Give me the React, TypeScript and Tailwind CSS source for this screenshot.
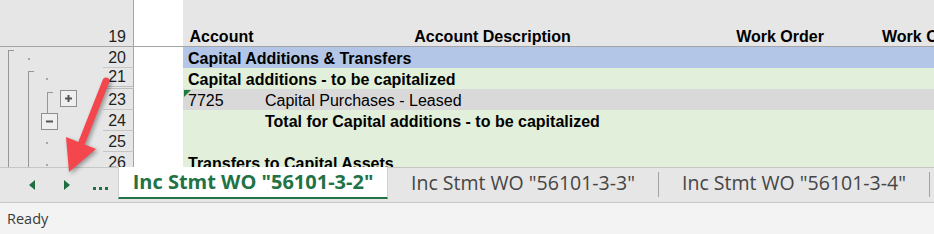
// ** Sheet rows shown under the header
type TSheetRow = {
    num: string
    fill: string
    doubleLine?: boolean
    span?: string
    account?: string
    desc?: string
    bold?: boolean
    flag?: boolean
}

const ROWS: TSheetRow[] = [
    {num: "20", fill: "bg-[#b4c6e7]", span: "Capital Additions & Transfers", bold: true},
    {num: "21", fill: "bg-[#e2efda]", span: "Capital additions - to be capitalized", bold: true, doubleLine: true},
    {num: "23", fill: "bg-[#d9d9d9]", account: "7725", desc: "Capital Purchases - Leased", flag: true},
    {num: "24", fill: "bg-[#e2efda]", account: "", desc: "Total for Capital additions - to be capitalized", bold: true},
    {num: "25", fill: "bg-[#e2efda]"},
    {num: "26", fill: "bg-[#e2efda]", span: "Transfers to Capital Assets", bold: true},
]

const TABS = ['Inc Stmt WO "56101-3-3"', 'Inc Stmt WO "56101-3-4"']

const OutlineButton = ({expand, className}: { expand?: boolean, className: string }) => (
    <div
        className={`absolute flex size-[17px] items-center justify-center border border-[#8f8f8f] bg-[#efefef] ${className}`}>
        <svg width="9" height="9" viewBox="0 0 9 9">
            <path d="M1 4.5h7" stroke="#555" strokeWidth="2"/>
            {expand && <path d="M4.5 1v7" stroke="#555" strokeWidth="2"/>}
        </svg>
    </div>
)

const OutlineGutter = () => (
    <div className="flex w-[103px] shrink-0 flex-col bg-[#e6e6e6]">
        <div className="h-[47px] shrink-0 border-b border-[#a5a5a5]"/>
        <div className="relative flex-1">
            {/* Level 1 */}
            <div className="absolute bottom-0 left-[8px] top-[3px] w-[6px] border-l border-t border-[#969696]"/>
            <div className="absolute left-[28px] top-[11px] size-[2px] bg-[#a8a8a8]"/>

            {/* Level 2 */}
            <div className="absolute bottom-0 left-[28px] top-[24px] w-[6px] border-l border-t border-[#969696]"/>
            <div className="absolute left-[46px] top-[31px] size-[2px] bg-[#a8a8a8]"/>

            {/* Level 3 */}
            <div className="absolute left-[47px] top-[45px] h-[21px] w-[6px] border-l border-t border-[#969696]"/>
            <OutlineButton expand className="left-[60px] top-[43px]"/>
            <OutlineButton className="left-[41px] top-[66px]"/>
            <div className="absolute left-[46px] top-[95px] size-[2px] bg-[#a8a8a8]"/>
            <div className="absolute left-[46px] top-[117px] size-[2px] bg-[#a8a8a8]"/>
        </div>
    </div>
)

const HeaderRow = () => (
    <div className="flex h-[47px] shrink-0 border-b border-[#a5a5a5] font-bold">
        <div
            className="flex w-[31px] shrink-0 items-end justify-end border-r border-[#a5a5a5] bg-[#e6e6e6] pr-[7px] font-normal text-[#1f1f1f]">19
        </div>
        <div className="w-[49px] shrink-0 bg-white"/>
        <div className="flex flex-1 items-end bg-[#e7e6e6] text-black">
            <div className="w-[77px] shrink-0 text-center">Account</div>
            <div className="w-[465px] shrink-0 text-center">Account Description</div>
            <div className="w-[110px] shrink-0 text-center">Work Order</div>
            <div className="flex-1 overflow-hidden whitespace-nowrap pl-[47px]">Work Order Description</div>
        </div>
    </div>
)

const SheetRow = ({row}: { row: TSheetRow }) => (
    <div className="flex h-[21px] shrink-0">
        <div
            className={`flex w-[31px] shrink-0 items-end justify-end border-r border-r-[#a5a5a5] bg-[#e6e6e6] pr-[7px] text-[#1f1f1f] ${row.doubleLine ? "border-b-[3px] border-double border-b-[#bdbdbd]" : "border-b border-b-[#c6c6c6]"}`}>
            {row.num}
        </div>
        <div className="w-[49px] shrink-0 bg-white"/>
        <div className={`flex flex-1 items-end whitespace-nowrap text-black ${row.fill} ${row.bold ? "font-bold" : ""}`}>
            {row.span && <div className="pl-[5px]">{row.span}</div>}
            {row.desc !== undefined && (
                <>
                    <div className="relative h-full w-[77px] shrink-0">
                        {row.flag && (
                            <svg className="absolute left-px top-px" width="7" height="7" viewBox="0 0 7 7">
                                <polygon points="0,0 7,0 0,7" fill="#1f7a3c"/>
                            </svg>
                        )}
                        <div className="absolute bottom-0 left-[5px]">{row.account}</div>
                    </div>
                    <div className="pl-[5px]">{row.desc}</div>
                </>
            )}
        </div>
    </div>
)

const TabBar = () => (
    <div className="flex h-[36px] shrink-0 items-start border-y border-[#c6c6c6] bg-[#e6e6e6] font-['Open_Sans',sans-serif]">
        {/* Navigation */}
        <div className="flex h-[34px] w-[118px] shrink-0 items-center pl-[29px]">
            <svg width="6" height="10" viewBox="0 0 6 10">
                <polygon points="6,0 6,10 0,5" fill="#1e6e42"/>
            </svg>
            <svg className="ml-[29px]" width="6" height="10" viewBox="0 0 6 10">
                <polygon points="0,0 0,10 6,5" fill="#1e6e42"/>
            </svg>
            <div className="ml-[23px] mt-[7px] flex gap-[3px]">
                <span className="size-[3px] bg-[#1e6e42]"/>
                <span className="size-[3px] bg-[#1e6e42]"/>
                <span className="size-[3px] bg-[#1e6e42]"/>
            </div>
        </div>

        {/* Active sheet */}
        <div
            className="-mt-px flex h-[32px] w-[270px] shrink-0 items-center justify-center border-x border-b-2 border-x-[#d0d0d0] border-b-[#217346] bg-white text-[20px] font-bold text-[#217346]">
            Inc Stmt WO "56101-3-2"
        </div>

        {/* Other sheets */}
        {TABS.map((tab) => (
            <div key={tab} className="flex shrink-0 items-start">
                <div
                    className="flex h-[29px] w-[270px] items-center justify-center whitespace-nowrap text-[19.5px] text-[#454545]">
                    {tab}
                </div>
                <div className="mt-[4px] h-[25px] w-px bg-[#a3a3a3]"/>
            </div>
        ))}
    </div>
)

export default function App() {
    return (
        <div className="relative flex h-[234px] w-[934px] flex-col overflow-hidden bg-white font-['Liberation_Sans',Arial,sans-serif] text-[16px] leading-[18px]">
            {/* Sheet */}
            <div className="flex h-[167px] shrink-0 overflow-hidden">
                <OutlineGutter/>
                <div className="flex flex-1 flex-col">
                    <HeaderRow/>
                    {ROWS.map((row) => (
                        <SheetRow key={row.num} row={row}/>
                    ))}
                </div>
            </div>

            <TabBar/>

            {/* Status bar */}
            <div
                className="flex flex-1 items-center bg-[#f3f3f3] pl-[7px] font-['Open_Sans',sans-serif] text-[14.5px] text-[#3a3a3a]">
                Ready
            </div>

            {/* Callout arrow */}
            <svg
                className="pointer-events-none absolute left-0 top-0 drop-shadow-[2px_2px_2px_rgba(0,0,0,0.35)]"
                width="140" height="200" viewBox="0 0 140 200">
                <line x1="106" y1="81" x2="82" y2="142" stroke="#f3464d" strokeWidth="7" strokeLinecap="round"/>
                <polygon points="66,137 96,149 69,172" fill="#f3464d"/>
            </svg>
        </div>
    )
}
